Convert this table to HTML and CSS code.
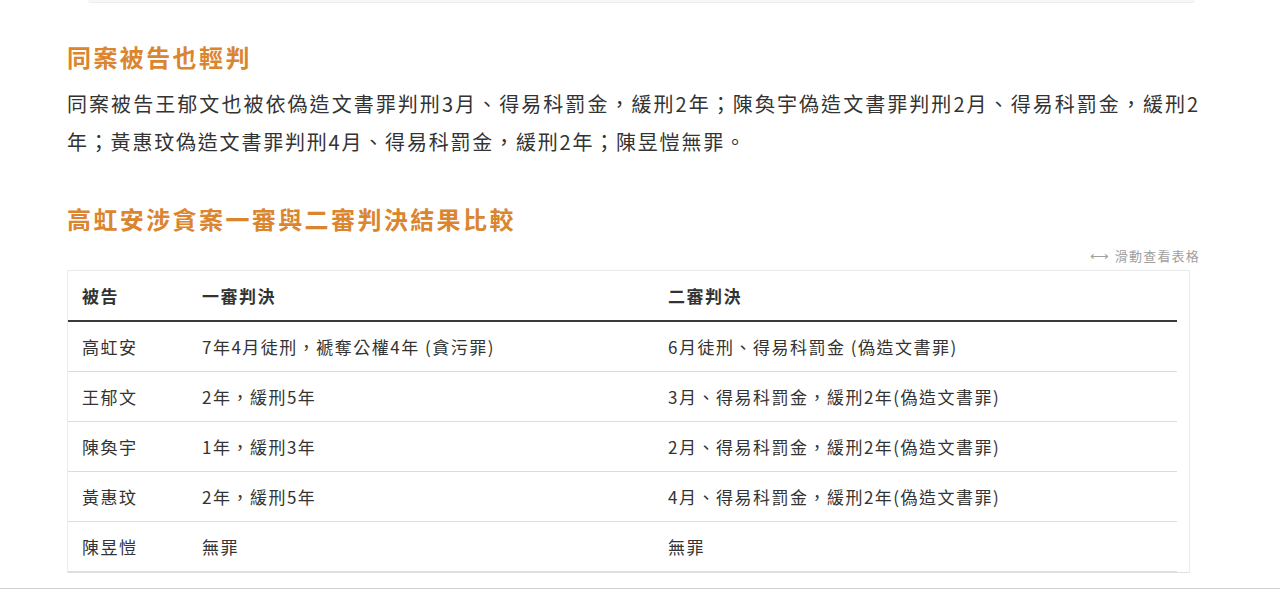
FILE: index.html
```html
<!DOCTYPE html>
<html lang="zh-Hant">
<head>
<meta charset="utf-8">
<title>高虹安涉貪案</title>
<link rel="stylesheet" href="styles.css">
</head>
<body>
<div class="top-card"></div>
<main class="article">
  <h2 class="section-title first">同案被告也輕判</h2>
  <p class="body-text">同案被告王郁文也被依偽造文書罪判刑3月、得易科罰金，緩刑2年；陳奐宇偽造文書罪判刑2月、得易科罰金，緩刑2年；黃惠玟偽造文書罪判刑4月、得易科罰金，緩刑2年；陳昱愷無罪。</p>
  <h2 class="section-title second">高虹安涉貪案一審與二審判決結果比較</h2>
  <div class="scroll-hint">⟷ 滑動查看表格</div>
  <div class="table-wrap">
    <table class="verdict-table">
      <thead>
        <tr><th class="c1">被告</th><th class="c2">一審判決</th><th class="c3">二審判決</th></tr>
      </thead>
      <tbody>
        <tr><td>高虹安</td><td>7年4月徒刑，褫奪公權4年 (貪污罪)</td><td>6月徒刑、得易科罰金 (偽造文書罪)</td></tr>
        <tr><td>王郁文</td><td>2年，緩刑5年</td><td>3月、得易科罰金，緩刑2年(偽造文書罪)</td></tr>
        <tr><td>陳奐宇</td><td>1年，緩刑3年</td><td>2月、得易科罰金，緩刑2年(偽造文書罪)</td></tr>
        <tr><td>黃惠玟</td><td>2年，緩刑5年</td><td>4月、得易科罰金，緩刑2年(偽造文書罪)</td></tr>
        <tr><td>陳昱愷</td><td>無罪</td><td>無罪</td></tr>
      </tbody>
    </table>
  </div>
</main>
<div class="page-rule"></div>
</body>
</html>
```

FILE: styles.css
```css
html, body {
  margin: 0;
  padding: 0;
  background: #ffffff;
  height: 589px;
  overflow: hidden;
}

body {
  font-family: "Noto Sans CJK TC", "Noto Sans", sans-serif;
  color: #333333;
}

.top-card {
  margin-left: 88px;
  width: 1107px;
  height: 2px;
  background: #f7f7f7;
  border-bottom: 1px solid #ececec;
  border-radius: 0 0 4px 4px;
}

.article {
  margin-left: 67px;
  width: 1133px;
}

.section-title {
  margin: 0;
  font-size: 24px;
  line-height: 34px;
  font-weight: 700;
  letter-spacing: 2.4px;
  color: #db852f;
}

.section-title.first {
  margin-top: 37px;
}

.section-title.second {
  margin-top: 41px;
}

.body-text {
  margin: 11px 0 0;
  font-size: 20px;
  line-height: 38px;
  letter-spacing: 1.8px;
  text-align: justify;
  color: #333333;
}

.scroll-hint {
  margin-top: 10px;
  text-align: right;
  font-size: 13px;
  line-height: 20px;
  letter-spacing: 1.2px;
  color: #a0a0a0;
}

.table-wrap {
  margin-top: 4px;
  width: 1121px;
  border: 1px solid #ebebeb;
  border-bottom-color: #e0e0e0;
}

.verdict-table {
  width: 1109px;
  border-collapse: collapse;
  table-layout: fixed;
  font-size: 17px;
  letter-spacing: 1.5px;
  color: #333333;
}

.verdict-table th,
.verdict-table td {
  text-align: left;
  padding: 0 0 0 14px;
  vertical-align: middle;
}

.verdict-table th {
  height: 49px;
  font-weight: 700;
  border-bottom: 2px solid #3a3a3a;
}

.verdict-table td {
  height: 49px;
  border-bottom: 1px solid #dcdcdc;
}

.verdict-table .c1 { width: 106px; }
.verdict-table .c2 { width: 452px; }

.page-rule {
  margin-top: 15px;
  height: 2px;
  background: #cfcfcf;
}
```
